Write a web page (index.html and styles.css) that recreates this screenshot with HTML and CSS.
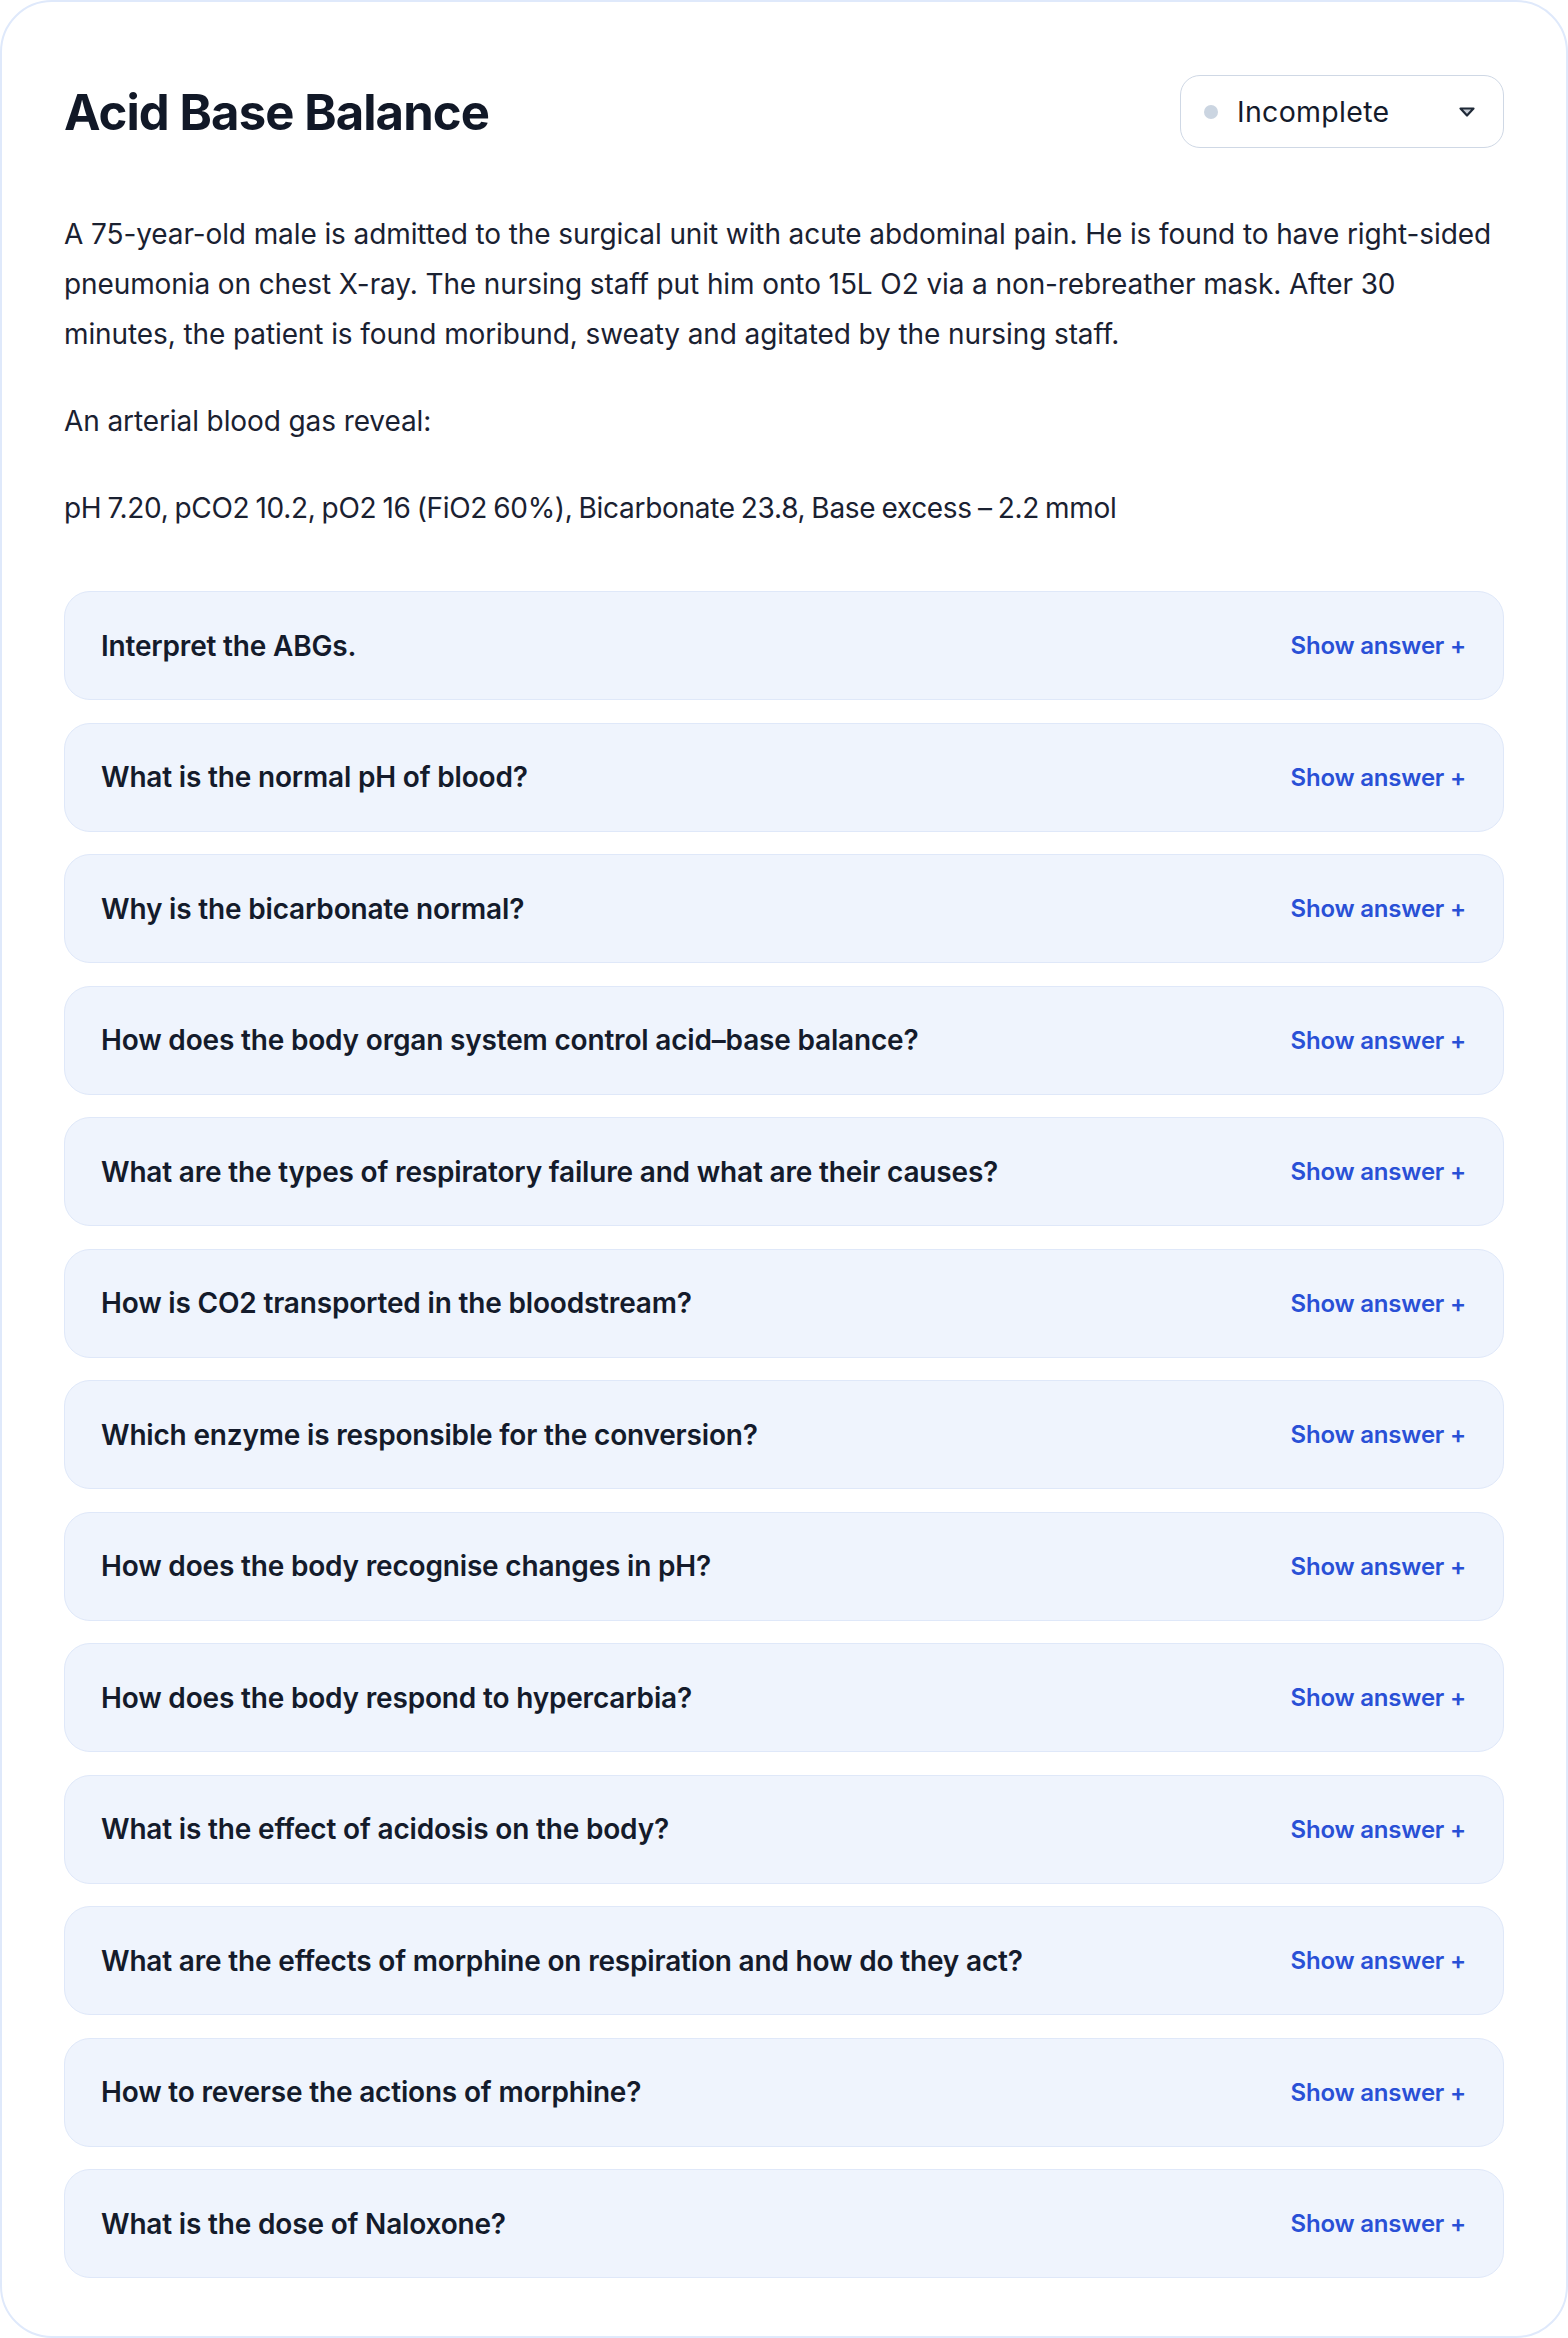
FILE: index.html
```html
<!DOCTYPE html>
<html lang="en">
<head>
<meta charset="utf-8">
<title>Acid Base Balance</title>
<link rel="stylesheet" href="styles.css">
</head>
<body>
<main class="card">
  <header class="header">
    <h1 class="title">Acid Base Balance</h1>
    <button class="status" type="button">
      <span class="status-dot"></span>
      <span class="status-label">Incomplete</span>
      <svg class="status-caret" width="18" height="12" viewBox="0 0 18 12" aria-hidden="true">
        <path d="M2.5 2.5 H15.5 L9 9.5 Z" fill="#c4cad3" stroke="#1f2937" stroke-width="2.2" stroke-linejoin="round"/>
      </svg>
    </button>
  </header>

  <section class="scenario">
    <p>A 75-year-old male is admitted to the surgical unit with acute abdominal pain. He is found to have right-sided pneumonia on chest X-ray. The nursing staff put him onto 15L O2 via a non-rebreather mask. After 30 minutes, the patient is found moribund, sweaty and agitated by the nursing staff.</p>
    <p>An arterial blood gas reveal:</p>
    <p class="abg">pH 7.20, pCO2 10.2, pO2 16 (FiO2 60%), Bicarbonate 23.8, Base excess – 2.2 mmol</p>
  </section>

  <ul class="questions">
    <li class="question"><span class="q-text">Interpret the ABGs.</span><span class="q-toggle">Show answer +</span></li>
    <li class="question"><span class="q-text">What is the normal pH of blood?</span><span class="q-toggle">Show answer +</span></li>
    <li class="question"><span class="q-text">Why is the bicarbonate normal?</span><span class="q-toggle">Show answer +</span></li>
    <li class="question"><span class="q-text">How does the body organ system control acid–base balance?</span><span class="q-toggle">Show answer +</span></li>
    <li class="question"><span class="q-text">What are the types of respiratory failure and what are their causes?</span><span class="q-toggle">Show answer +</span></li>
    <li class="question"><span class="q-text">How is CO2 transported in the bloodstream?</span><span class="q-toggle">Show answer +</span></li>
    <li class="question"><span class="q-text">Which enzyme is responsible for the conversion?</span><span class="q-toggle">Show answer +</span></li>
    <li class="question"><span class="q-text">How does the body recognise changes in pH?</span><span class="q-toggle">Show answer +</span></li>
    <li class="question"><span class="q-text">How does the body respond to hypercarbia?</span><span class="q-toggle">Show answer +</span></li>
    <li class="question"><span class="q-text">What is the effect of acidosis on the body?</span><span class="q-toggle">Show answer +</span></li>
    <li class="question"><span class="q-text">What are the effects of morphine on respiration and how do they act?</span><span class="q-toggle">Show answer +</span></li>
    <li class="question"><span class="q-text">How to reverse the actions of morphine?</span><span class="q-toggle">Show answer +</span></li>
    <li class="question"><span class="q-text">What is the dose of Naloxone?</span><span class="q-toggle">Show answer +</span></li>
  </ul>
</main>
</body>
</html>
```

FILE: styles.css
```css
* { box-sizing: border-box; }

html, body {
  margin: 0;
  padding: 0;
  background: #ffffff;
}

body {
  font-family: Inter, "Noto Sans", "Liberation Sans", sans-serif;
  color: #141b2b;
}

.card {
  width: 1568px;
  min-height: 2338px;
  border: 2px solid #dfe9fb;
  border-radius: 52px;
  padding: 73px 62px 55px;
  background: #ffffff;
}

.header {
  display: flex;
  align-items: center;
  justify-content: space-between;
  height: 73px;
}

.title {
  margin: 0;
  font-size: 49px;
  font-weight: 700;
  letter-spacing: -0.9px;
  color: #111827;
  line-height: 1;
  padding-top: 2px;
}

.status {
  display: flex;
  align-items: center;
  width: 324px;
  height: 73px;
  padding: 0 27px 0 23px;
  border: 1px solid #cfd8e5;
  border-radius: 20px;
  background: #ffffff;
  font-family: inherit;
  cursor: pointer;
}

.status-dot {
  width: 14px;
  height: 14px;
  border-radius: 50%;
  background: #cbd5e1;
  flex: none;
}

.status-label {
  margin-left: 19px;
  font-size: 28.5px;
  font-weight: 400;
  letter-spacing: 0.3px;
  color: #141b2b;
  flex: 1;
  text-align: left;
}

.status-caret {
  flex: none;
}

.scenario {
  margin-top: 61px;
}

.scenario p {
  margin: 0 0 37px;
  font-size: 28px;
  line-height: 50px;
  letter-spacing: -0.1px;
  color: #1a2131;
}

.scenario p:last-child {
  margin-bottom: 0;
}

.scenario .abg {
  letter-spacing: -0.3px;
  word-spacing: -1.5px;
}

.questions {
  list-style: none;
  margin: 58px 0 0;
  padding: 0;
  display: flex;
  flex-direction: column;
  gap: 22.5px;
}

.question {
  display: flex;
  align-items: center;
  justify-content: space-between;
  height: 109px;
  padding: 0 37px 0 36px;
  background: #eff4fd;
  border: 1px solid #dfe8f9;
  border-radius: 26px;
}

.q-text {
  font-size: 28px;
  font-weight: 600;
  letter-spacing: -0.18px;
  color: #141b2b;
}

.q-toggle {
  font-size: 24px;
  font-weight: 600;
  letter-spacing: -0.2px;
  color: #2950d6;
  white-space: nowrap;
}
```
